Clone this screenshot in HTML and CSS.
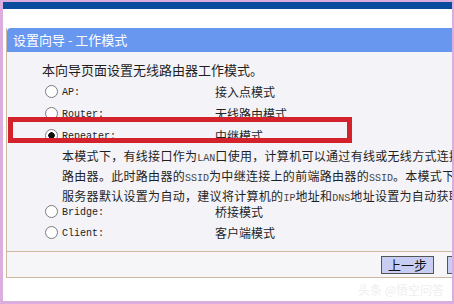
FILE: index.html
```html
<!DOCTYPE html>
<html lang="zh-CN">
<head>
  <meta charset="UTF-8" />
  <title>设置向导 - 工作模式</title>
  <link rel="stylesheet" href="styles.css">
</head>
<body>
  <div class="screen">
    <div class="panel">
      <div class="panel-head">设置向导 - 工作模式</div>

      <div class="panel-body">
        <div class="intro">本向导页面设置无线路由器工作模式。</div>

        <div class="mode-row">
          <label class="opt"><input type="radio" name="mode"><span class="opt-name">AP:</span></label>
          <span class="mode-desc">接入点模式</span>
        </div>
        <div class="mode-row">
          <label class="opt"><input type="radio" name="mode"><span class="opt-name">Router:</span></label>
          <span class="mode-desc">无线路由模式</span>
        </div>
        <div class="mode-row">
          <label class="opt"><input type="radio" name="mode" checked><span class="opt-name">Repeater:</span></label>
          <span class="mode-desc">中继模式</span>
        </div>

        <div class="note">
          <div class="note-line">本模式下，有线接口作为<span class="en">LAN</span>口使用，计算机可以通过有线或无线方式连接</div>
          <div class="note-line">路由器。此时路由器的<span class="en">SSID</span>为中继连接上的前端路由器的<span class="en">SSID</span>。本模式下<span class="en">D</span></div>
          <div class="note-line">服务器默认设置为自动，建议将计算机的<span class="en">IP</span>地址和<span class="en">DNS</span>地址设置为自动获取</div>
        </div>

        <div class="mode-row tight">
          <label class="opt"><input type="radio" name="mode"><span class="opt-name">Bridge:</span></label>
          <span class="mode-desc">桥接模式</span>
        </div>
        <div class="mode-row">
          <label class="opt"><input type="radio" name="mode"><span class="opt-name">Client:</span></label>
          <span class="mode-desc">客户端模式</span>
        </div>

        <div class="highlight"></div>
      </div>

      <div class="panel-foot">
        <button class="btn">上一步</button>
        <button class="btn">下一步</button>
      </div>
    </div>

    <div class="watermark">头条 @悟空问答</div>
  </div>
</body>
</html>
```

FILE: styles.css
```css
body {
  margin: 0;
  background-color: #dcaee0;
  font-family: "Noto Sans CJK SC", "Noto Sans", sans-serif;
  font-size: 13px;
  color: #1f1f1f;
}
.screen {
  margin: 2px 2px 3px 3px;
  height: 299px;
  box-sizing: border-box;
  background-color: #fff;
  border-top: 7px solid #0c4c9c;
  overflow: hidden;
}
.panel {
  margin: 19px 0 0 3px;
  border-left: 1px solid #cdb89e;
  overflow: hidden;
}
.panel-head {
  height: 24px;
  line-height: 23px;
  padding-left: 6px;
  background-color: #6797ef;
  border-radius: 4px 0 0 0;
  color: #fff;
  white-space: nowrap;
}
.panel-body {
  position: relative;
  height: 200px;
  padding-top: 8px;
  box-sizing: border-box;
  background-color: #f4f3f7;
  border-bottom: 1px solid #cdb89e;
}
.intro {
  height: 20px;
  line-height: 20px;
  padding-left: 35px;
  white-space: nowrap;
}
.mode-row {
  display: flex;
  align-items: center;
  height: 22px;
  padding-left: 38px;
}
.mode-row.tight {
  margin-top: -5px;
  height: 20px;
}
.opt {
  display: flex;
  align-items: center;
  width: 170px;
}
.opt input {
  appearance: none;
  -webkit-appearance: none;
  width: 13px;
  height: 13px;
  margin: 0 4px 0 0;
  border: 1px solid #7c7c7c;
  border-radius: 50%;
  background-color: #fff;
}
.opt input:checked {
  background: radial-gradient(circle, #111 0, #111 3px, #fff 3.5px);
}
.opt-name {
  font-family: "Liberation Mono", monospace;
  font-size: 10px;
  color: #222;
  padding-top: 3px;
}
.mode-desc {
  font-size: 12px;
  white-space: nowrap;
}
.note {
  padding-left: 55px;
  font-size: 12px;
  letter-spacing: 0.3px;
}
.note-line {
  height: 20px;
  line-height: 20px;
  white-space: nowrap;
}
.en {
  font-family: "Liberation Mono", monospace;
  font-size: 10px;
  letter-spacing: 0;
  color: #444;
}
.highlight {
  position: absolute;
  left: 1px;
  top: 65px;
  width: 344px;
  height: 26px;
  box-sizing: border-box;
  border: 5px solid #d3222b;
}
.panel-foot {
  display: flex;
  align-items: center;
  gap: 13px;
  height: 25px;
  padding-left: 374px;
  background-color: #f6f5f7;
  border-bottom: 1px solid #cdb89e;
}
.btn {
  flex-shrink: 0;
  width: 53px;
  height: 18px;
  padding: 0;
  border: 1px solid #555;
  background-color: #c8cdf3;
  font-family: "Noto Sans CJK SC", sans-serif;
  font-size: 13px;
  line-height: 15px;
  color: #111;
}
.watermark {
  padding: 3px 8px 0 0;
  text-align: right;
  font-size: 12px;
  color: #eeeeee;
}
```
